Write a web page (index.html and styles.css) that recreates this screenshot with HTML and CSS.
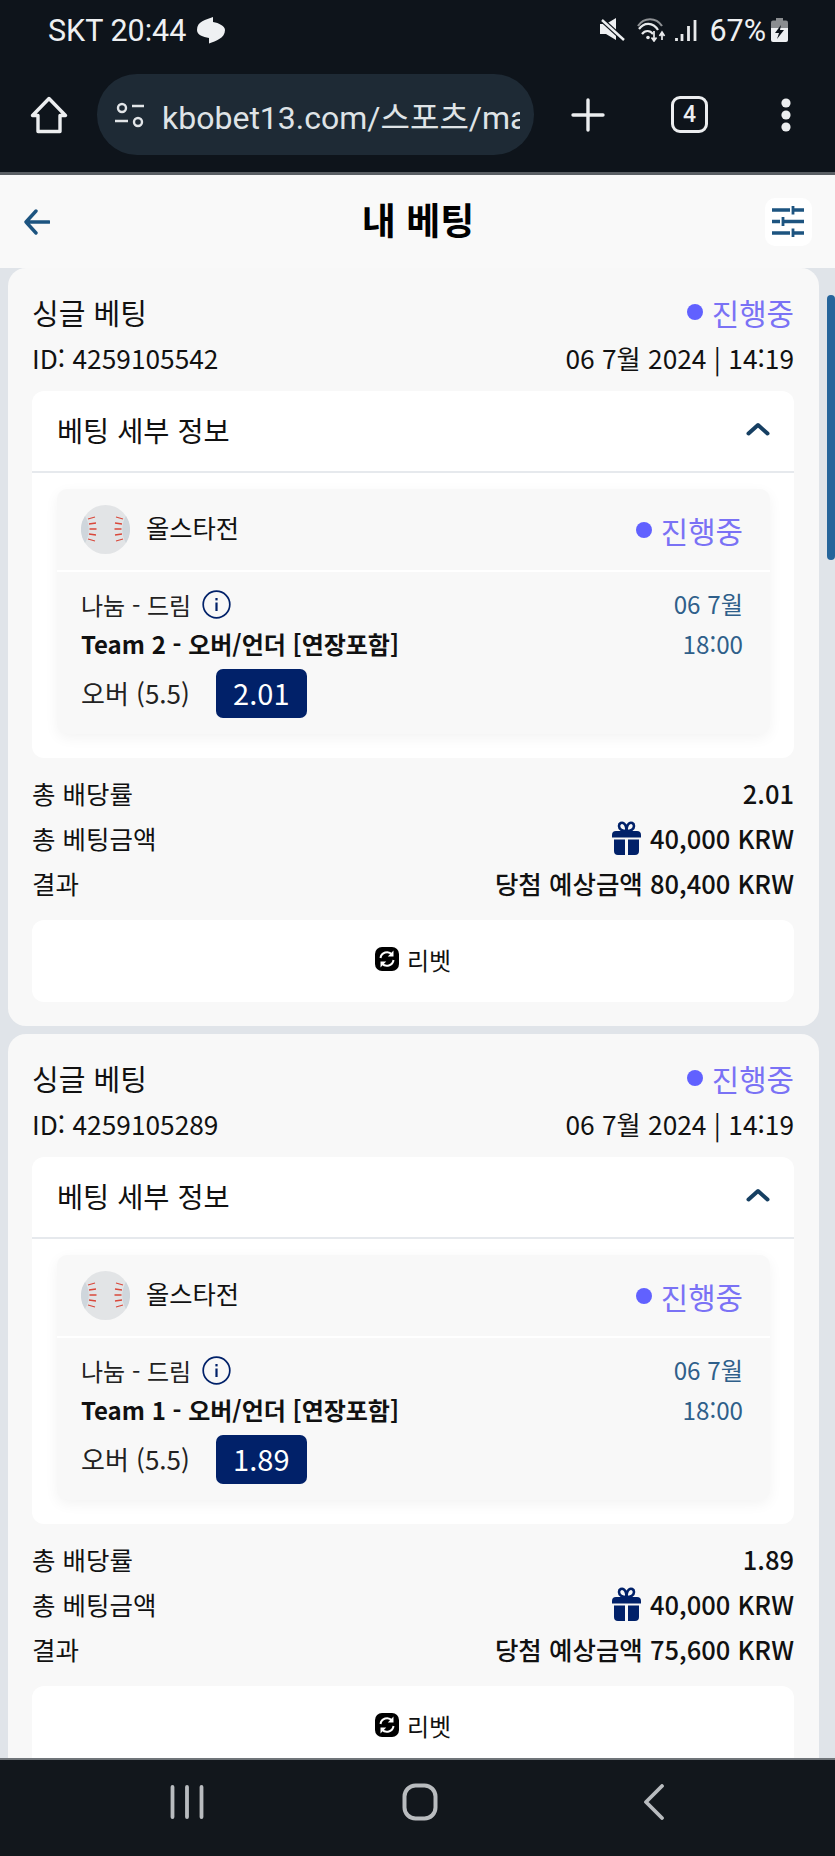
FILE: index.html
```html
<!DOCTYPE html>
<html lang="ko">
  <head>
    <meta charset="utf-8">
    <title>내 베팅</title>
    <link rel="stylesheet" href="styles.css">
  </head>
  <body>
    <svg class="defs" width="0" height="0">
      <symbol id="ball" viewBox="0 0 49 49">
        <circle cx="24.5" cy="24.5" r="24.5" fill="#e2e4e6"/>
        <path d="M4 11C9 19 9 30 4 38A24.500 24.500 0 0 1 4 11ZM45 11C40 19 40 30 45 38A24.500 24.500 0 0 0 45 11Z" fill="#cfd6dc"/>
        <path d="M7 14l7 -2M8 19l7 -1M8.500 24l7 0M8 29l7 1M7 34l7 2M35 12l7 2M34 18l7 1M33.500 24l7 0M34 30l7 -1M35 36l7 -2" stroke="#d9483b" stroke-width="1.300" fill="none"/>
      </symbol>
      <symbol id="gift" viewBox="0 0 29 34">
        <path d="M0 14a4 4 0 0 1 4 -4h21a4 4 0 0 1 4 4v2.500H0ZM2 18.500h11V34H6a4 4 0 0 1 -4 -4ZM16 18.500h11V30a4 4 0 0 1 -4 4h-7ZM13 10h3v6.500h-3Z" fill="#012169"/>
        <path d="M14.500 10C10 10 7 8 7 5C7 2 10 1 12 2.500C13.500 3.700 14.500 7 14.500 10C14.500 7 15.500 3.700 17 2.500C19 1 22 2 22 5C22 8 19 10 14.500 10Z" fill="none" stroke="#012169" stroke-width="2.600"/>
      </symbol>
      <symbol id="rebet" viewBox="0 0 24 24">
        <rect width="24" height="24" rx="7" fill="#000"/>
        <path d="M5.500 11A6.600 6.600 0 0 1 17 7.500M18.500 13A6.600 6.600 0 0 1 7 16.500" fill="none" stroke="#fff" stroke-width="2"/>
        <path d="M18.500 3.500V9.500H12.800ZM5.500 20.500V14.500H11.200Z" fill="#fff"/>
      </symbol>
      <symbol id="info" viewBox="0 0 29 29">
        <circle cx="14.500" cy="14.500" r="13.300" fill="none" stroke="#012169" stroke-width="1.700"/>
        <rect x="13.400" y="12.500" width="2.200" height="8.500" fill="#012169"/>
        <rect x="13.400" y="8" width="2.200" height="2.400" fill="#012169"/>
      </symbol>
      <symbol id="chev" viewBox="0 0 24 14">
        <path d="M2.500 11.500L12 3L21.500 11.500" fill="none" stroke="#163f62" stroke-width="4" stroke-linecap="round" stroke-linejoin="round"/>
      </symbol>
    </svg>

    <div class="statusbar">
      <div class="status-left">
        <span>SKT 20:44</span>
        <svg width="30" height="27" viewBox="0 0 30 27"><path d="M17 0C10 3 1 4 1 13C1 18 7 20 13 21L13 26.500C20 24 29 21 29 13C29 9 23 6 17 5Z" fill="#eef0f2"/></svg>
      </div>
      <div class="status-right">
        <svg class="ic-mute" width="26" height="24" viewBox="0 0 26 24"><path d="M0 6h6l10 -6v22l-10 -6H0Z" fill="#eef0f2"/><path d="M2 2L24 22" stroke="#0e141b" stroke-width="5"/><path d="M2 2L24 22" stroke="#eef0f2" stroke-width="2.400"/></svg>
        <svg class="ic-wifi" width="31" height="24" viewBox="0 0 31 24"><path d="M2 8C8 -1 20 -1 26 8" fill="none" stroke="#8f9295" stroke-width="2.200"/><path d="M3 11C8 4 17 4 22 12M6 16C9 12 14 12 17 16" fill="none" stroke="#e8eaec" stroke-width="2.200"/><circle cx="12" cy="19.500" r="1.800" fill="#e8eaec"/><path d="M18 13V22M15.500 19.500L18 23L20.500 19.500M26 22V15M23.500 18L26 14L28.500 18" fill="none" stroke="#e8eaec" stroke-width="1.700"/></svg>
        <svg class="ic-signal" width="22" height="24" viewBox="0 0 22 24"><path d="M1.500 20V23M7 16V23M13.500 8V23M20 2V23" stroke="#e8eaec" stroke-width="2.800"/></svg>
        <span class="batt-text">67%</span>
        <svg class="ic-batt" width="17" height="24" viewBox="0 0 17 24"><path d="M5 0h7v3H5Z" fill="#8a8d90"/><rect x="0" y="2.500" width="17" height="10" rx="2" fill="#8a8d90"/><path d="M0 10h17v12a2 2 0 0 1 -2 2H2a2 2 0 0 1 -2 -2Z" fill="#eef0f2"/><path d="M10 7L4 15h4l-2 6l7 -9H9Z" fill="#0e141b"/></svg>
      </div>
    </div>

    <div class="browserbar">
      <svg class="b-home" width="38" height="38" viewBox="0 0 38 38"><path d="M19 2.500L35.500 19.500H30V35.500H8V19.500H2.500Z" fill="none" stroke="#eceef0" stroke-width="3.400" stroke-linejoin="round"/></svg>
      <div class="urlbox">
        <svg width="30" height="26" viewBox="0 0 30 26"><circle cx="7" cy="6" r="4" fill="none" stroke="#e2e5e8" stroke-width="2.400"/><path d="M17 4H29M0 19H13" stroke="#e2e5e8" stroke-width="2.600"/><circle cx="23" cy="20" r="4" fill="none" stroke="#e2e5e8" stroke-width="2.400"/></svg>
        <div class="urltext">kbobet13.com/스포츠/ma</div>
      </div>
      <svg class="b-plus" width="34" height="34" viewBox="0 0 34 34"><path d="M17 2V32M2 17H32" stroke="#eceef0" stroke-width="3.400" stroke-linecap="round"/></svg>
      <div class="tabcount">4</div>
      <svg class="b-dots" width="12" height="34" viewBox="0 0 12 34"><circle cx="6" cy="5" r="4.600" fill="#eceef0"/><circle cx="6" cy="17" r="4.600" fill="#eceef0"/><circle cx="6" cy="29" r="4.600" fill="#eceef0"/></svg>
    </div>

    <div class="pagehead">
      <div class="backbtn">
        <svg width="26" height="26" viewBox="0 0 26 26"><path d="M12 2L2 13L12 24M2 13H25" fill="none" stroke="#1d5480" stroke-width="3.400" stroke-linecap="round" stroke-linejoin="round"/></svg>
      </div>
      <h1>내 베팅</h1>
      <div class="filterbtn">
        <svg width="32" height="31" viewBox="0 0 32 31"><path d="M0 4H18M21 4H32M0 15.500H8M11 15.500H32M0 27H18M21 27H32" stroke="#1d5480" stroke-width="3.400"/><path d="M21 0V8.500M11 11V20M21 22.500V31" stroke="#1d5480" stroke-width="2.800"/></svg>
      </div>
    </div>

    <div class="content">
      <div class="scrollthumb"></div>

      <div class="card">
        <div class="row title-row">
          <span>싱글 베팅</span>
          <span class="state"><i class="dot"></i>진행중</span>
        </div>
        <div class="row id-row">
          <span>ID: 4259105542</span>
          <span>06 7월 2024 | 14:19</span>
        </div>
        <div class="details">
          <div class="details-head">
            <span>베팅 세부 정보</span>
            <svg width="24" height="14"><use href="#chev"/></svg>
          </div>
          <div class="details-body">
            <div class="betbox">
              <div class="betbox-head">
                <div class="league">
                  <svg width="49" height="49"><use href="#ball"/></svg>
                  <span>올스타전</span>
                </div>
                <span class="state"><i class="dot"></i>진행중</span>
              </div>
              <div class="betbox-main">
                <div class="bet-info">
                  <div class="teams">나눔 - 드림 <svg width="29" height="29"><use href="#info"/></svg></div>
                  <div class="market">Team 2 - 오버/언더 [연장포함]</div>
                  <div class="pick"><span>오버 (5.5)</span><span class="odd">2.01</span></div>
                </div>
                <div class="bet-date">
                  <div>06 7월</div>
                  <div>18:00</div>
                </div>
              </div>
            </div>
          </div>
        </div>
        <div class="summary">
          <div class="row"><span>총 배당률</span><b>2.01</b></div>
          <div class="row"><span>총 베팅금액</span><b class="stake"><svg width="29" height="34"><use href="#gift"/></svg>40,000 KRW</b></div>
          <div class="row"><span>결과</span><b>당첨 예상금액 80,400 KRW</b></div>
        </div>
        <div class="rebet"><svg width="24" height="24"><use href="#rebet"/></svg>리벳</div>
      </div>

      <div class="card">
        <div class="row title-row">
          <span>싱글 베팅</span>
          <span class="state"><i class="dot"></i>진행중</span>
        </div>
        <div class="row id-row">
          <span>ID: 4259105289</span>
          <span>06 7월 2024 | 14:19</span>
        </div>
        <div class="details">
          <div class="details-head">
            <span>베팅 세부 정보</span>
            <svg width="24" height="14"><use href="#chev"/></svg>
          </div>
          <div class="details-body">
            <div class="betbox">
              <div class="betbox-head">
                <div class="league">
                  <svg width="49" height="49"><use href="#ball"/></svg>
                  <span>올스타전</span>
                </div>
                <span class="state"><i class="dot"></i>진행중</span>
              </div>
              <div class="betbox-main">
                <div class="bet-info">
                  <div class="teams">나눔 - 드림 <svg width="29" height="29"><use href="#info"/></svg></div>
                  <div class="market">Team 1 - 오버/언더 [연장포함]</div>
                  <div class="pick"><span>오버 (5.5)</span><span class="odd">1.89</span></div>
                </div>
                <div class="bet-date">
                  <div>06 7월</div>
                  <div>18:00</div>
                </div>
              </div>
            </div>
          </div>
        </div>
        <div class="summary">
          <div class="row"><span>총 배당률</span><b>1.89</b></div>
          <div class="row"><span>총 베팅금액</span><b class="stake"><svg width="29" height="34"><use href="#gift"/></svg>40,000 KRW</b></div>
          <div class="row"><span>결과</span><b>당첨 예상금액 75,600 KRW</b></div>
        </div>
        <div class="rebet"><svg width="24" height="24"><use href="#rebet"/></svg>리벳</div>
      </div>
    </div>

    <div class="navbar">
      <svg width="34" height="34" viewBox="0 0 34 34"><path d="M2.500 2V32M17 2V32M31.500 2V32" stroke="#b9bcbf" stroke-width="3.800" stroke-linecap="round"/></svg>
      <svg class="nav-home" width="36" height="38" viewBox="0 0 36 38"><rect x="2.500" y="2.500" width="31" height="33" rx="11" fill="none" stroke="#b9bcbf" stroke-width="4"/></svg>
      <svg width="22" height="36" viewBox="0 0 22 36"><path d="M19 2L3 18L19 34" fill="none" stroke="#b9bcbf" stroke-width="3.800" stroke-linecap="round" stroke-linejoin="round"/></svg>
    </div>
  </body>
</html>
```

FILE: styles.css
```css
* {
  box-sizing: border-box;
}

html, body {
  margin: 0;
  height: 1856px;
  overflow: hidden;
}

body {
  display: flex;
  flex-direction: column;
  background-color: #e0e4e9;
  font-family: "Noto Sans CJK KR", "Noto Sans", sans-serif;
  color: #111;
}

.defs {
  position: absolute;
}

svg {
  display: block;
  flex: none;
}

/* phone chrome */
.statusbar {
  height: 60px;
  padding: 0 47px 0 48px;
  flex: none;
  display: flex;
  align-items: center;
  justify-content: space-between;
  background-color: #0e141b;
  color: #eef0f2;
  font-family: Roboto, sans-serif;
  font-size: 30.500px;
}

.status-left {
  display: flex;
  align-items: center;
  gap: 10px;
}

.status-right {
  display: flex;
  align-items: center;
}

.ic-wifi {
  margin-left: 10px;
}

.ic-signal {
  margin-left: 8px;
}

.batt-text {
  margin-left: 12px;
}

.ic-batt {
  margin-left: 5px;
}

.browserbar {
  height: 112px;
  padding: 4px 0 0 30px;
  flex: none;
  display: flex;
  align-items: center;
  background-color: #0e141b;
}

.urlbox {
  width: 437px;
  height: 81px;
  margin: 0 0 7px 29px;
  padding: 0 14px 0 18px;
  display: flex;
  align-items: center;
  gap: 17px;
  border-radius: 40px;
  background-color: #1e2a35;
}

.urltext {
  flex: 1;
  overflow: hidden;
  white-space: nowrap;
  color: #dfe3e6;
  font-family: Roboto, "Noto Sans CJK KR", sans-serif;
  font-size: 32px;
}

.b-home {
  margin-bottom: 7px;
}

.b-plus {
  margin: 0 0 7px 37px;
}

.tabcount {
  width: 37px;
  height: 37px;
  margin: 0 0 7px 66px;
  display: flex;
  align-items: center;
  justify-content: center;
  border: 3.500px solid #eceef0;
  border-radius: 9px;
  color: #eceef0;
  font-family: Roboto, sans-serif;
  font-size: 23px;
  font-weight: 500;
}

.b-dots {
  margin: 0 0 7px 72px;
}

.pagehead {
  height: 96px;
  padding: 0 23px 0 24px;
  flex: none;
  display: flex;
  align-items: center;
  justify-content: space-between;
  background-color: #f9f9f9;
  border-top: 3px solid #5a5f64;
}

.backbtn {
  width: 47px;
}

.pagehead h1 {
  margin: 0 0 4px;
  font-size: 37px;
  font-weight: 700;
  line-height: 1;
  color: #000;
}

.filterbtn {
  width: 47px;
  height: 48px;
  display: flex;
  align-items: center;
  justify-content: center;
  border-radius: 10px;
  background-color: #fff;
}

.navbar {
  height: 98px;
  padding: 0 170px 12px;
  flex: none;
  display: flex;
  align-items: center;
  justify-content: space-between;
  background-color: #12171c;
  border-top: 2px solid #70757a;
}

.nav-home {
  margin-right: 7px;
}

/* page content */
.content {
  position: relative;
  flex: 1;
  min-height: 0;
  overflow: hidden;
  padding: 0 16px 0 8px;
}

.scrollthumb {
  position: absolute;
  top: 27px;
  right: 0;
  width: 8px;
  height: 265px;
  border-radius: 4px;
  background-color: #26659b;
}

.card {
  height: 758px;
  margin-bottom: 8px;
  padding: 26px 25px 24px 24px;
  border-radius: 18px;
  background-color: #f8f8f8;
}

.row {
  display: flex;
  align-items: center;
  justify-content: space-between;
}

.title-row {
  height: 40px;
  padding-bottom: 4px;
  font-size: 29px;
}

.id-row {
  height: 40px;
  margin-top: 5px;
  padding-bottom: 4px;
  font-size: 26.300px;
}

.state {
  display: flex;
  align-items: center;
  color: #7a72f5;
  font-size: 29.800px;
}

.dot {
  width: 16px;
  height: 16px;
  margin-right: 9px;
  border-radius: 50%;
  background-color: #6161ff;
}

.details {
  height: 367px;
  margin-top: 12px;
  border-radius: 12px;
  background-color: #fff;
}

.details-head {
  height: 82px;
  padding: 0 24px 4px 25px;
  display: flex;
  align-items: center;
  justify-content: space-between;
  border-bottom: 2px solid #e6e9ed;
  font-size: 28.400px;
}

.details-body {
  padding: 16px 24px 0 25px;
}

.betbox {
  height: 245px;
  border-radius: 10px;
  background-color: #f8f8f8;
  box-shadow: 0 4px 14px rgba(0, 0, 0, 0.05);
}

.betbox-head {
  height: 83px;
  padding: 0 27px 0 24px;
  display: flex;
  align-items: center;
  justify-content: space-between;
  border-bottom: 2px solid #fff;
}

.league {
  display: flex;
  align-items: center;
  gap: 16px;
  font-size: 25.300px;
}

.league span {
  margin-bottom: 6px;
}

.betbox-main {
  padding: 12px 27px 0 24px;
  display: flex;
  justify-content: space-between;
}

.teams {
  height: 40px;
  display: flex;
  align-items: center;
  gap: 11px;
  font-size: 24px;
  color: #222;
}

.market {
  height: 40px;
  line-height: 40px;
  font-size: 24px;
  font-weight: 700;
}

.pick {
  height: 49px;
  margin-top: 5px;
  display: flex;
  align-items: center;
  gap: 26px;
  font-size: 26px;
  color: #222;
}

.pick span:first-child {
  margin-bottom: 3px;
}

.odd {
  width: 91px;
  height: 49px;
  line-height: 46px;
  border-radius: 7px;
  background-color: #012169;
  color: #fff;
  font-size: 29px;
  text-align: center;
}

.bet-date {
  color: #2f5f8a;
  font-size: 24.200px;
  text-align: right;
}

.bet-date div {
  height: 40px;
  line-height: 40px;
}

.summary {
  margin-top: 14px;
  font-size: 25.500px;
}

.summary .row {
  height: 45px;
  padding-bottom: 4px;
}

.summary b {
  font-weight: 500;
  font-size: 25.500px;
}

.summary .stake {
  display: flex;
  align-items: center;
  gap: 9px;
}

.rebet {
  height: 82px;
  margin-top: 13px;
  padding-bottom: 4px;
  display: flex;
  align-items: center;
  justify-content: center;
  gap: 8px;
  border-radius: 12px;
  background-color: #fff;
  font-size: 24px;
}
```
